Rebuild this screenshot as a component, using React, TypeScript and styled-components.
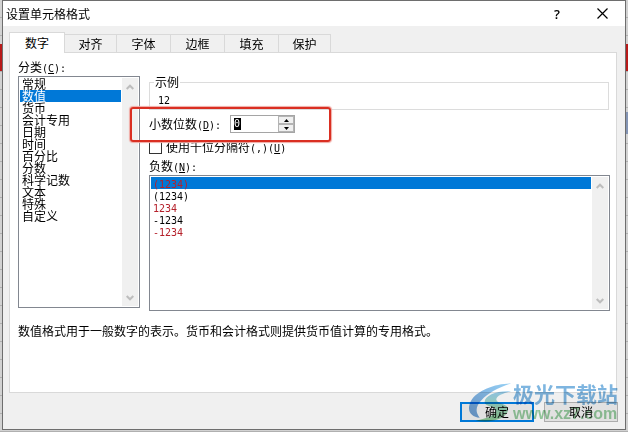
import React, { useState } from "react";
import styled, { createGlobalStyle } from "styled-components";

const GlobalStyle = createGlobalStyle`
  *, *::before, *::after { box-sizing: border-box; }
  body {
    margin: 0;
    color: #000;
    font: 12px/14px "Noto Sans CJK SC", sans-serif;
  }
  button, input { font: inherit; color: inherit; }
  ul { margin: 0; padding: 0; list-style: none; }
`;

const Desktop = styled.div`
  min-height: 100vh;
  padding: 0 2px 2px;
  background:
    linear-gradient(#b81a1a, #b81a1a) 0 44px / 100% 27px no-repeat,
    linear-gradient(#8394b4, #8394b4) 100% 112px / 2px 22px no-repeat,
    repeating-linear-gradient(#d2d2d2 0 17px, #b0b0b0 17px 18px);
`;

const Dialog = styled.main`
  position: relative;
  border: 1px solid #6e6e6e;
  background: #f0f0f0;
`;

const TitleBar = styled.header`
  display: flex;
  align-items: center;
  height: 25px;
  padding: 0 11px 0 3px;
  background: #fff;
`;

const Title = styled.h1`
  flex: 1;
  margin: 0;
  font-size: 12px;
  line-height: 18px;
  font-weight: 400;
`;

const TitleButton = styled.button`
  display: grid;
  place-items: center;
  width: 24px;
  height: 20px;
  margin-left: 21px;
  padding: 0;
  border: 0;
  background: none;
  font: 600 13px/16px "Open Sans", sans-serif;
`;

const Body = styled.div`
  padding: 6px 8px 7px 6px;
`;

const Tabs = styled.div`
  display: flex;
  align-items: flex-end;
`;

const Tab = styled.button<{ $active: boolean; $width: number }>`
  width: ${(p) => p.$width}px;
  height: ${(p) => (p.$active ? 21 : 18)}px;
  margin-bottom: ${(p) => (p.$active ? -1 : 0)}px;
  padding: ${(p) => (p.$active ? 0 : 1)}px 0 0;
  border: 1px solid #d9d9d9;
  border-bottom: 0;
  border-left-width: ${(p) => (p.$active ? 1 : 0)}px;
  background: ${(p) => (p.$active ? "#fff" : "#f0f0f0")};
  line-height: 14px;
  z-index: ${(p) => (p.$active ? 1 : 0)};
`;

const Panel = styled.section`
  padding: 5px 6px 51px 8px;
  border: 1px solid #d9d9d9;
  background: #fff;
`;

const Columns = styled.div`
  display: grid;
  grid-template-columns: 122px 1fr;
  column-gap: 9px;
  align-items: start;
`;

const Settings = styled.div`
  display: flex;
  flex-direction: column;
  padding-top: 17px;
`;

const FieldLabel = styled.div`
  height: 18px;
  line-height: 18px;
`;

const Latin = styled.span`
  font: 10px/12px "DejaVu Sans Mono", monospace;
`;

const Mnemonic = styled.span`
  text-decoration: underline;
`;

const ListFrame = styled.div<{ $height: number }>`
  display: flex;
  height: ${(p) => p.$height}px;
  padding: 1px;
  border: 1px solid #828790;
  background: #fff;
`;

const Options = styled.ul`
  flex: 1;
  margin-right: 1px;
`;

const Option = styled.li<{ $selected: boolean; $red?: boolean }>`
  height: 12px;
  padding-left: 2px;
  line-height: 12px;
  white-space: nowrap;
  color: ${(p) => (p.$red ? "#b5202a" : p.$selected ? "#fff" : "#000")};
  background: ${(p) => (p.$selected ? "#0078d7" : "transparent")};
`;

const Scrollbar = styled.div`
  display: flex;
  flex-direction: column;
  justify-content: space-between;
  width: 16px;
  background: #f0f0f0;
`;

const ScrollButton = styled.button`
  display: grid;
  place-items: center;
  width: 16px;
  height: 17px;
  padding: 0;
  border: 0;
  background: none;
`;

const Sample = styled.fieldset`
  min-width: 0;
  height: 35px;
  margin: 0 1px 0 0;
  padding: 3px 8px 0;
  border: 1px solid #dcdcdc;
`;

const SampleLegend = styled.legend`
  height: 14px;
  margin-left: -4px;
  padding: 0 1px;
  line-height: 14px;
`;

const DecimalRow = styled.div`
  position: relative;
  display: flex;
  align-items: center;
  gap: 9px;
  width: max-content;
  height: 18px;
  margin-top: 5px;
`;

const DecimalLabel = styled.label`
  width: 72px;
  line-height: 18px;
  white-space: nowrap;
`;

const Highlight = styled.div`
  position: absolute;
  inset: -8px -36px -9px -19px;
  border: 2px solid #da2f22;
  border-radius: 3px;
  box-shadow: 0 0 1px 1px #f0a9a3;
  pointer-events: none;
  z-index: 2;
`;

const Spinner = styled.div`
  display: flex;
  width: 65px;
  height: 18px;
  border: 1px solid #a5a5a5;
  background: #fff;
`;

const SpinnerInput = styled.input`
  flex: 1;
  min-width: 0;
  height: 16px;
  padding: 0 0 0 3px;
  border: 0;
  outline: 0;
  color: #fff;
  background: linear-gradient(#000, #000) 3px 2px / 7px 12px no-repeat;
  font: 10px/16px "DejaVu Sans Mono", monospace;
`;

const SpinnerButtons = styled.div`
  display: grid;
  grid-template-rows: 1fr 1fr;
  width: 16px;
`;

const StepButton = styled.button`
  display: grid;
  place-items: center;
  padding: 0;
  border: 1px solid #b4b4b4;
  background: #f0f0f0;
`;

const CheckRow = styled.label`
  display: flex;
  align-items: center;
  gap: 4px;
  height: 14px;
  margin: 7px 0 3px;
  line-height: 14px;
`;

const CheckBox = styled.input`
  appearance: none;
  width: 13px;
  height: 13px;
  margin: 0;
  border: 1px solid #333;
  background: #fff;
  &:checked { background: #0078d7; }
`;

const Description = styled.p`
  margin: 10px 0 0;
  line-height: 20px;
`;

const Footer = styled.footer`
  display: flex;
  justify-content: flex-end;
  gap: 10px;
  margin: 9px -1px 0 0;
`;

const ActionButton = styled.button<{ $primary?: boolean }>`
  width: 74px;
  height: 20px;
  padding: 0;
  border: ${(p) => (p.$primary ? "2px solid #0078d7" : "1px solid #adadad")};
  background: #e1e1e1;
  line-height: 16px;
`;

const Watermark = styled.div`
  position: absolute;
  right: 7px;
  bottom: 5px;
  display: flex;
  width: 150px;
  opacity: 0.8;
  mix-blend-mode: multiply;
  pointer-events: none;
`;

const WatermarkText = styled.div`
  display: flex;
  flex-direction: column;
  width: 106px;
  white-space: nowrap;
`;

const WatermarkName = styled.span`
  font-size: 21px;
  line-height: 22px;
  font-weight: 700;
  color: #5da3d8;
`;

const WatermarkUrl = styled.span`
  font: 700 16px/20px "Liberation Sans", sans-serif;
  color: #7fc48b;
`;

const tabs = [
  { name: "数字", width: 56 },
  { name: "对齐", width: 52 },
  { name: "字体", width: 54 },
  { name: "边框", width: 54 },
  { name: "填充", width: 54 },
  { name: "保护", width: 52 },
];

const categories = [
  "常规", "数值", "货币", "会计专用", "日期", "时间",
  "百分比", "分数", "科学记数", "文本", "特殊", "自定义",
];

const negatives = [
  { text: "(1234)", red: true },
  { text: "(1234)", red: false },
  { text: "1234", red: true },
  { text: "-1234", red: false },
  { text: "-1234", red: true },
];

function Key({ letter, colon = true }: { letter: string; colon?: boolean }) {
  return (
    <Latin>
      (<Mnemonic>{letter}</Mnemonic>){colon ? ":" : ""}
    </Latin>
  );
}

function Chevron({ down = false }: { down?: boolean }) {
  return (
    <svg width="8" height="6" viewBox="0 0 8 6" aria-hidden="true">
      <path
        d={down ? "M0.7 1 L4 4.3 L7.3 1" : "M0.7 5 L4 1.7 L7.3 5"}
        fill="none"
        stroke="#bdbdbd"
        strokeWidth="2"
      />
    </svg>
  );
}

function Scroll({ label }: { label: string }) {
  return (
    <Scrollbar>
      <ScrollButton aria-label={`${label} 向上`}><Chevron /></ScrollButton>
      <ScrollButton aria-label={`${label} 向下`}><Chevron down /></ScrollButton>
    </Scrollbar>
  );
}

function Triangle({ down = false }: { down?: boolean }) {
  return (
    <svg width="5" height="3" viewBox="0 0 5 3" aria-hidden="true">
      <path d={down ? "M0 0 H5 L2.5 3 Z" : "M0 3 H5 L2.5 0 Z"} />
    </svg>
  );
}

function Logo() {
  return (
    <svg width="46" height="42" viewBox="0 0 46 42" aria-hidden="true">
      <defs>
        <linearGradient id="swirlTop" x1="0" y1="1" x2="1" y2="0">
          <stop offset="0" stopColor="#4a86cc" />
          <stop offset="1" stopColor="#7cc4f0" />
        </linearGradient>
        <linearGradient id="swirlLow" x1="0" y1="0" x2="0" y2="1">
          <stop offset="0" stopColor="#7cc0ec" />
          <stop offset="0.45" stopColor="#86cfb4" />
          <stop offset="1" stopColor="#74c27c" />
        </linearGradient>
      </defs>
      <path
        d="M44 1 C28 1 9 8 3 19 C-2 29 3 35 12 36 C7 30 8 24 14 18 C20 11 32 5 44 1 Z"
        fill="url(#swirlTop)"
      />
      <path
        d="M44 9 C30 8 17 13 17 20 C17 25 27 24 28 28 C29 33 20 37 8 39 C24 42 40 37 41 28 C42 22 30 22 29 18 C28 14 36 11 44 9 Z"
        fill="url(#swirlLow)"
      />
    </svg>
  );
}

export default function App() {
  const [tab, setTab] = useState(0);
  const [category, setCategory] = useState(1);
  const [negative, setNegative] = useState(0);
  const [decimals, setDecimals] = useState("0");
  const step = (by: number) =>
    setDecimals((value) => String(Math.max(0, (Number(value) || 0) + by)));

  return (
    <>
      <GlobalStyle />
      <Desktop>
        <Dialog role="dialog" aria-labelledby="dialog-title">
          <TitleBar>
            <Title id="dialog-title">设置单元格格式</Title>
            <TitleButton aria-label="帮助">?</TitleButton>
            <TitleButton aria-label="关闭">
              <svg width="11" height="11" viewBox="0 0 11 11" aria-hidden="true">
                <path d="M0.5 0.5 L10.5 10.5 M10.5 0.5 L0.5 10.5" stroke="#000" strokeWidth="1.2" />
              </svg>
            </TitleButton>
          </TitleBar>
          <Body>
            <Tabs role="tablist">
              {tabs.map((item, i) => (
                <Tab
                  key={item.name}
                  role="tab"
                  aria-selected={tab === i}
                  $active={tab === i}
                  $width={item.width}
                  onClick={() => setTab(i)}
                >
                  {item.name}
                </Tab>
              ))}
            </Tabs>
            <Panel role="tabpanel">
              <Columns>
                <div>
                  <FieldLabel id="category-label">分类<Key letter="C" /></FieldLabel>
                  <ListFrame $height={232}>
                    <Options role="listbox" aria-labelledby="category-label">
                      {categories.map((name, i) => (
                        <Option
                          key={name}
                          role="option"
                          aria-selected={category === i}
                          $selected={category === i}
                          onClick={() => setCategory(i)}
                        >
                          {name}
                        </Option>
                      ))}
                    </Options>
                    <Scroll label="分类" />
                  </ListFrame>
                </div>
                <Settings>
                  <Sample>
                    <SampleLegend>示例</SampleLegend>
                    <Latin>12</Latin>
                  </Sample>
                  <DecimalRow>
                    <DecimalLabel htmlFor="decimals">小数位数<Key letter="D" /></DecimalLabel>
                    <Spinner>
                      <SpinnerInput
                        id="decimals"
                        value={decimals}
                        onChange={(e) => setDecimals(e.target.value)}
                      />
                      <SpinnerButtons>
                        <StepButton aria-label="增加" onClick={() => step(1)}><Triangle /></StepButton>
                        <StepButton aria-label="减少" onClick={() => step(-1)}><Triangle down /></StepButton>
                      </SpinnerButtons>
                    </Spinner>
                    <Highlight />
                  </DecimalRow>
                  <CheckRow>
                    <CheckBox type="checkbox" />
                    <span>使用千位分隔符<Latin>(,)</Latin><Key letter="U" colon={false} /></span>
                  </CheckRow>
                  <FieldLabel id="negative-label">负数<Key letter="N" /></FieldLabel>
                  <ListFrame $height={136}>
                    <Options role="listbox" aria-labelledby="negative-label">
                      {negatives.map((item, i) => (
                        <Option
                          key={i}
                          role="option"
                          aria-selected={negative === i}
                          $selected={negative === i}
                          $red={item.red}
                          onClick={() => setNegative(i)}
                        >
                          <Latin>{item.text}</Latin>
                        </Option>
                      ))}
                    </Options>
                    <Scroll label="负数" />
                  </ListFrame>
                </Settings>
              </Columns>
              <Description>数值格式用于一般数字的表示。货币和会计格式则提供货币值计算的专用格式。</Description>
            </Panel>
            <Footer>
              <ActionButton $primary>确定</ActionButton>
              <ActionButton>取消</ActionButton>
            </Footer>
          </Body>
          <Watermark>
            <Logo />
            <WatermarkText>
              <WatermarkName>极光下载站</WatermarkName>
              <WatermarkUrl>www.xz7.com</WatermarkUrl>
            </WatermarkText>
          </Watermark>
        </Dialog>
      </Desktop>
    </>
  );
}
